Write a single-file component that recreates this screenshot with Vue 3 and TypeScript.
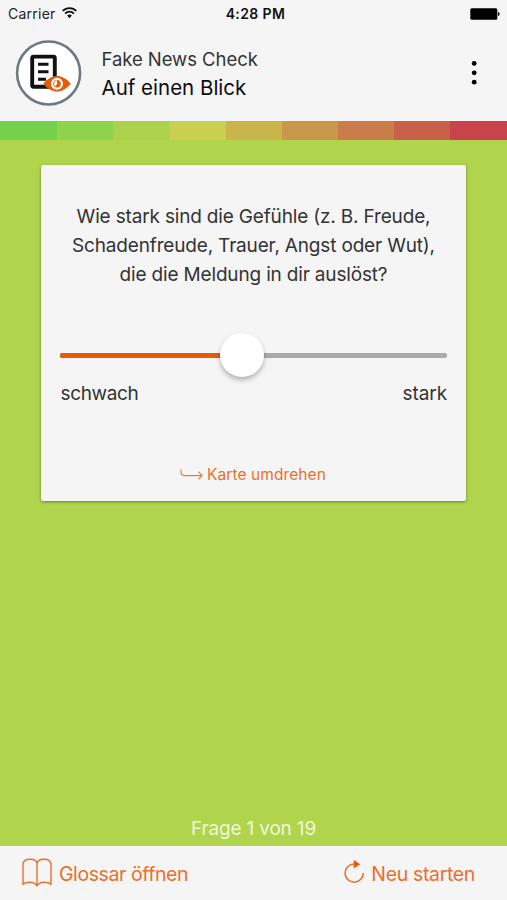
<script setup lang="ts">
import { ref, computed } from 'vue'

const scale: string[] = ['#74d14c', '#8fd24d', '#acd24d', '#c9cf4e', '#c9b54b', '#c9984a', '#c97d4a', '#c9604a', '#c9434a']
const question: string[] = [
  'Wie stark sind die Gefühle (z. B. Freude,',
  'Schadenfreude, Trauer, Angst oder Wut),',
  'die die Meldung in dir auslöst?',
]
const current = 1
const total = 19
const value = ref(46.9)
const position = computed(() => `${value.value}%`)
</script>

<template>
  <div class="screen">
    <div class="status">
      <div class="carrier">
        <span>Carrier</span>
        <svg width="15" height="12" viewBox="0 0 15 12" fill="none" stroke="#111" stroke-width="1.8">
          <path d="M.7 4a9.4 9.4 0 0 1 13.6 0M3.1 6.6a6 6 0 0 1 8.8 0" />
          <path d="M5.1 8.6a3.6 3.6 0 0 1 4.8 0L7.5 11.3z" fill="#111" stroke="none" />
        </svg>
      </div>
      <span class="clock">4:28 PM</span>
      <svg class="battery" width="31" height="12" viewBox="0 0 31 12">
        <rect x="1.3" y=".2" width="27" height="11.6" rx="1.5" fill="#000" />
        <path d="M29 4c2.2.4 2.2 3.6 0 4z" fill="#111" />
      </svg>
    </div>

    <header class="header">
      <svg class="logo" width="67" height="66" viewBox="0 0 67 66">
        <circle cx="33.6" cy="33" r="31.5" fill="#fff" stroke="#6f797d" stroke-width="2.6" />
        <rect x="17.2" y="16.6" width="22.6" height="30.2" rx="1.5" fill="none" stroke="#111" stroke-width="3.9" />
        <path d="M23 24.2h10.5M23 31.7h10.5M23 39.3h8" stroke="#111" stroke-width="3" />
        <path d="M28.2 43.7C32.5 38.6 37.5 36 42 36S51.500 38.600 55.800 43.700C51.500 48.900 46.500 51.500 42 51.500S32.500 48.900 28.200 43.700Z" fill="#e45c08" />
        <circle cx="42" cy="43.700" r="4.900" fill="#e45c08" stroke="#fff" stroke-width="2.200" />
        <path d="M42 43.700v-3.500a3.500 3.500 0 0 0-1.500 6.300z" fill="#fff" />
      </svg>
      <div class="titles">
        <span class="app-name">Fake News Check</span>
        <span class="page-name">Auf einen Blick</span>
      </div>
      <svg class="menu" width="6" height="26" viewBox="0 0 6 26" fill="#000">
        <circle cx="3.2" cy="3.4" r="2.4" />
        <circle cx="3.2" cy="12.8" r="2.4" />
        <circle cx="3.2" cy="22.2" r="2.4" />
      </svg>
    </header>

    <div class="scale">
      <div v-for="color in scale" :key="color" :style="{ background: color }"></div>
    </div>

    <main class="content">
      <section class="card">
        <p class="question">
          <span v-for="line in question" :key="line">{{ line }}</span>
        </p>
        <div class="slider">
          <div class="fill" :style="{ width: position }"></div>
          <div class="thumb" :style="{ left: position }"></div>
        </div>
        <div class="labels">
          <span class="weak">schwach</span>
          <span class="strong">stark</span>
        </div>
        <a class="flip">
          <svg width="24" height="12" viewBox="0 0 24 12" fill="none" stroke="#e97b3c" stroke-width="1.15" stroke-linecap="round">
            <path d="M1 .8v2.4q0 3.4 4 3.4H22M18.8 3.2L22.2 6.6l-3.4 3.4" />
          </svg>
          <span>Karte umdrehen</span>
        </a>
      </section>
      <p class="progress">Frage {{ current }} von {{ total }}</p>
    </main>

    <footer class="footer">
      <a class="action glossary">
        <svg width="31" height="30" viewBox="0 0 31 30" fill="none" stroke="#e8702c" stroke-width="1.4" stroke-linejoin="round">
          <path d="M15 5.500C14 .8 9.500 1.200 8 1.200S2.300.8 1 5.500v21C3.500 23.500 12.500 23 15 28C17.500 23 26.500 23.500 29 26.500v-21C27.700.8 23.500 1.200 22 1.200S16 .8 15 5.500V28" />
        </svg>
        <span>Glossar öffnen</span>
      </a>
      <a class="action restart">
        <svg width="21" height="24" viewBox="0 0 21 24" fill="none">
          <path d="M10.500 4A9.100 9.100 0 1 0 19.300 13" stroke="#e8702c" stroke-width="1.600" />
          <path d="M9.700 0v8.600l6.600-4.300z" fill="#e45c08" />
        </svg>
        <span>Neu starten</span>
      </a>
    </footer>
  </div>
</template>

<style>
body {
  margin: 0;
}
</style>

<style scoped>
.screen {
  width: 507px;
  height: 900px;
  display: flex;
  flex-direction: column;
  overflow: hidden;
  background: #f5f5f5;
  color: #333;
  font-family: Inter, "Liberation Sans", sans-serif;
  white-space: nowrap;
}

p {
  margin: 0;
}

.status {
  height: 27px;
  box-sizing: border-box;
  padding: 0 7px 0 8px;
  display: grid;
  grid-template-columns: 1fr auto 1fr;
  align-items: center;
  color: #222;
  font-size: 14px;
}

.carrier {
  display: flex;
  align-items: center;
  gap: 6px;
  letter-spacing: 0.25px;
}

.carrier svg {
  margin-top: -2px;
}

.clock {
  font-size: 14px;
  font-weight: 600;
  letter-spacing: 0.4px;
  padding-left: 3px;
  color: #111;
}

.battery {
  justify-self: end;
}

.header {
  height: 94px;
  box-sizing: border-box;
  padding: 13px 30px 0 15px;
  display: flex;
  align-items: flex-start;
}

.titles {
  flex: 1;
  display: flex;
  flex-direction: column;
  padding: 5px 0 0 19.5px;
  line-height: 28px;
}

.app-name {
  font-size: 18.5px;
  letter-spacing: -0.05px;
}

.page-name {
  margin-top: 1px;
  color: #0c0c0c;
  font-size: 20.5px;
}

.menu {
  margin-top: 20px;
}

.scale {
  height: 19px;
  display: grid;
  grid-template-columns: 57px repeat(7, 56.2px) 1fr;
}

.content {
  flex: 1;
  display: flex;
  flex-direction: column;
  align-items: center;
  justify-content: space-between;
  padding: 25px 0 5px;
  background: #b0d44b;
}

.card {
  width: 425px;
  height: 336px;
  box-sizing: border-box;
  padding: 37px 20px 15px;
  display: flex;
  flex-direction: column;
  border-radius: 2px;
  background: #f5f5f5;
  box-shadow: 0 1px 3px rgba(0, 0, 0, 0.4);
}

.question {
  display: flex;
  flex-direction: column;
  align-items: center;
  font-size: 19px;
  line-height: 29px;
  letter-spacing: -0.17px;
}

.slider {
  position: relative;
  height: 5px;
  margin: 63.5px 0 0 -1px;
  width: 387px;
  border-radius: 2px;
  background: #aaa;
}

.fill {
  height: 100%;
  border-radius: 2px;
  background: #e45c08;
}

.thumb {
  position: absolute;
  top: 50%;
  width: 44px;
  height: 44px;
  border-radius: 50%;
  background: #fff;
  box-shadow: 0 3px 5px rgba(0, 0, 0, 0.28);
  transform: translate(-50%, -50%);
}

.labels {
  display: flex;
  justify-content: space-between;
  margin: 24px -1px 0 -0.5px;
  font-size: 19px;
  line-height: 24px;
}

.weak {
  letter-spacing: -0.35px;
}

.strong {
  letter-spacing: -0.1px;
}

.flip {
  display: flex;
  align-items: center;
  justify-content: center;
  gap: 3px;
  margin: auto 1px 0 0;
  color: #e8702c;
  font-size: 15.5px;
  letter-spacing: 0.08px;
  line-height: 22px;
}

.progress {
  color: #eff7db;
  font-size: 19px;
  letter-spacing: -0.17px;
  line-height: 24px;
}

.footer {
  height: 54px;
  box-sizing: border-box;
  padding: 1px 32px 0 22px;
  display: flex;
  align-items: center;
  justify-content: space-between;
}

.action {
  display: flex;
  align-items: center;
  gap: 6px;
  color: #e8702c;
  font-size: 19.5px;
}

.action svg {
  margin-top: -1px;
}

.restart svg {
  margin-top: -3px;
}

.glossary {
  letter-spacing: -0.43px;
}

.restart {
  letter-spacing: -0.35px;
}
</style>
